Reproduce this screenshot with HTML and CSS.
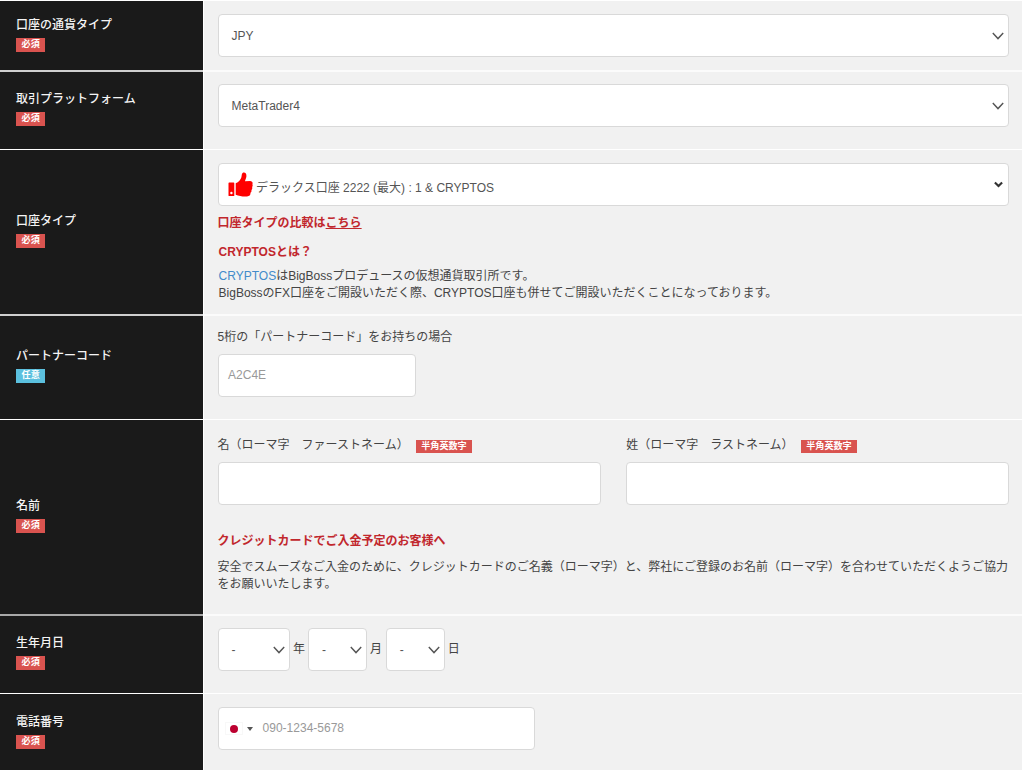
FILE: index.html
```html
<!DOCTYPE html>
<html lang="ja">
<head>
<meta charset="utf-8">
<title>口座開設</title>
<link rel="stylesheet" href="styles.css">
</head>
<body>
<div class="form">
  <div class="row row-currency">
    <div class="head"><span class="name">口座の通貨タイプ</span><span class="badge">必須</span></div>
    <div class="cell">
      <div class="control select"><span class="value">JPY</span><svg class="chevron" viewBox="0 0 12 8"><path d="M0.8 1 6 6.6 11.2 1"/></svg></div>
    </div>
  </div>
  <div class="row row-platform">
    <div class="head"><span class="name">取引プラットフォーム</span><span class="badge">必須</span></div>
    <div class="cell">
      <div class="control select"><span class="value">MetaTrader4</span><svg class="chevron" viewBox="0 0 12 8"><path d="M0.8 1 6 6.6 11.2 1"/></svg></div>
    </div>
  </div>
  <div class="row row-type">
    <div class="head"><span class="name">口座タイプ</span><span class="badge">必須</span></div>
    <div class="cell">
      <div class="control type-select">
        <svg class="thumb" viewBox="0 0 25 25"><path fill-rule="evenodd" d="M1.2 10.5H5.6Q6.3 10.5 6.3 11.2V23.4Q6.3 24.1 5.6 24.1H1.2Q.5 24.1 .5 23.4V11.2Q.5 10.5 1.2 10.5ZM3.4 19.8A1.2 1.2 0 1 0 3.4 22.2 1.2 1.2 0 1 0 3.4 19.8Z"/><path d="M7.7 11.2C10.8 10.4 12.6 7.6 13.4 5.2 13.8 3.6 13.7 1 15.2.6 17.4.2 18.7 2 18.4 4.4 18.2 6.3 17.2 7.8 17 9.2L22.2 8.9C24.6 9 25 11 24.4 12.2 24.9 13.2 24.7 14.4 24.1 15 24.5 16 24.2 17.4 23.4 18 23.8 19.2 23.3 20.3 22.5 20.8 22.7 23.2 21.4 24.3 19 24.4 14.8 24.7 11.2 24 7.7 22.7Z"/></svg>
        <span class="type-text">デラックス口座 2222 (最大) : 1 &amp; CRYPTOS</span>
        <svg class="arrow" viewBox="0 0 8 6"><path d="M.8 1.2 4 4.4 7.2 1.2"/></svg>
      </div>
      <p class="compare">口座タイプの比較は<a class="here">こちら</a></p>
      <p class="about-title">CRYPTOSとは？</p>
      <p class="about"><a class="link">CRYPTOS</a>はBigBossプロデュースの仮想通貨取引所です。<br>BigBossのFX口座をご開設いただく際、CRYPTOS口座も併せてご開設いただくことになっております。</p>
    </div>
  </div>
  <div class="row row-partner">
    <div class="head"><span class="name">パートナーコード</span><span class="badge optional">任意</span></div>
    <div class="cell">
      <p class="caption">5桁の「パートナーコード」をお持ちの場合</p>
      <div class="control partner placeholder">A2C4E</div>
    </div>
  </div>
  <div class="row row-name">
    <div class="head"><span class="name">名前</span><span class="badge">必須</span></div>
    <div class="cell">
      <div class="names">
        <div class="field"><p class="caption">名（ローマ字　ファーストネーム）<span class="badge">半角英数字</span></p><div class="control"></div></div>
        <div class="field"><p class="caption">姓（ローマ字　ラストネーム）<span class="badge">半角英数字</span></p><div class="control"></div></div>
      </div>
      <p class="card-title">クレジットカードでご入金予定のお客様へ</p>
      <p class="card-text">安全でスムーズなご入金のために、クレジットカードのご名義（ローマ字）と、弊社にご登録のお名前（ローマ字）を合わせていただくようご協力<br>をお願いいたします。</p>
    </div>
  </div>
  <div class="row row-birth">
    <div class="head"><span class="name">生年月日</span><span class="badge">必須</span></div>
    <div class="cell dates">
      <div class="control date year"><span class="value">-</span><svg class="chevron" viewBox="0 0 12 8"><path d="M0.8 1 6 6.6 11.2 1"/></svg></div><span class="unit">年</span>
      <div class="control date"><span class="value">-</span><svg class="chevron" viewBox="0 0 12 8"><path d="M0.8 1 6 6.6 11.2 1"/></svg></div><span class="unit unit-month">月</span>
      <div class="control date"><span class="value">-</span><svg class="chevron" viewBox="0 0 12 8"><path d="M0.8 1 6 6.6 11.2 1"/></svg></div><span class="unit">日</span>
    </div>
  </div>
  <div class="row row-phone">
    <div class="head"><span class="name">電話番号</span><span class="badge">必須</span></div>
    <div class="cell">
      <div class="control phone placeholder"><span class="flag"><span class="sun"></span></span><span class="caret"></span>090-1234-5678</div>
    </div>
  </div>
</div>
</body>
</html>
```
FILE: styles.css
```css
* { box-sizing: border-box; }
html, body { margin: 0; height: 770px; overflow: hidden; }
body {
  background: #fff;
  color: #444;
  font: 12px/17px "Liberation Sans", "Noto Sans CJK JP", sans-serif;
}
p { margin: 0; white-space: nowrap; }

/* rows: dark heading column and light content column */
.form {
  display: grid;
  grid-template-rows: 70px 79px 165px 105px 195px 79px 79px;
  width: 1022px;
}
.row {
  display: grid;
  grid-template-columns: 203px 1fr;
  column-gap: 1px;
}
.head, .cell { border-top: 1px solid #fff; }
.row-platform > *, .row-partner > *, .row-birth > * { border-top-width: 2px; }
.row-platform > .head, .row-partner > .head { border-top-color: #cfcfcf; }
.row-birth > .head { border-top-color: #a8a8a8; }
.row-platform > .cell, .row-partner > .cell, .row-birth > .cell { border-top-color: #fbfbfb; }
.head {
  display: flex;
  flex-direction: column;
  justify-content: center;
  align-items: flex-start;
  gap: 4px;
  padding: 0 0 4px 16px;
  background: #1a1a1a;
}
.row-currency .head { padding-bottom: 3px; }
.cell { padding: 13px 13px 0 13.6px; background: #f1f1f1; }
.row-platform .cell { padding-top: 12px; }
.name { color: #f4f4f4; font-weight: 500; }
.badge {
  display: inline-block;
  height: 14px;
  padding: 0 5.6px;
  background: #d9534f;
  color: #fff;
  font-size: 9.1px;
  line-height: 13px;
  font-weight: 700;
}
.optional { background: #5bc0de; }

/* form controls */
.control {
  display: flex;
  align-items: center;
  height: 43px;
  border: 1px solid #d9d9d9;
  border-radius: 4px;
  background: #fff;
  color: #555;
}
.select { justify-content: space-between; padding: 0 4px 0 13px; }
.select .value { padding-top: 1px; }
.chevron { width: 12px; height: 8px; fill: none; stroke: #555; stroke-width: 1.4; }
.placeholder { color: #999; }

.type-select { width: 791px; padding: 0 5px 0 9px; }
.thumb { width: 25px; height: 25px; fill: #f00; }
.type-text { flex: 1; padding: 8px 0 0 3.5px; }
.arrow { width: 9px; height: 7px; fill: none; stroke: #333; stroke-width: 1.9; }
.compare, .about-title, .card-title { color: #c1272d; font-weight: 700; }
.compare { margin-top: 9px; }
.here { text-decoration: underline; }
.about-title { margin: 12px 0 0 1px; }
.about { margin: 7px 0 0 1px; }
.link { color: #428bca; }

.row-partner .cell { padding-top: 12px; }
.row-partner .caption { padding-top: 1px; }
.partner { width: 198px; margin-top: 8px; padding-left: 9.5px; }

.row-name .cell { padding-top: 17px; }
.names { display: grid; grid-template-columns: 383px 383px; column-gap: 25.6px; }
.names .caption { display: flex; align-items: center; height: 17px; }
.names .badge { height: 13px; margin: 2px 0 0 7px; }
.names .control { margin-top: 8px; }
.card-title { margin-top: 28px; }
.card-text { margin-top: 9px; }

.row-birth .cell { padding-top: 12px; }
.dates { display: flex; }
.date { justify-content: space-between; width: 59px; padding: 0 4px 0 13px; }
.date .value { padding-top: 2px; }
.year { width: 72.4px; }
.unit { width: 18px; padding: 13px 0 0 3px; }
.unit-month { width: 18.8px; }

.phone { width: 317.5px; padding-left: 6px; }
.flag {
  display: flex;
  align-items: center;
  justify-content: center;
  width: 18px;
  height: 13px;
  border: 1px solid #f8f8f8;
}
.sun { width: 8px; height: 8px; border-radius: 50%; background: #bc0030; }
.caret {
  margin: 0 10px 0 4px;
  border: 3px solid transparent;
  border-top: 4px solid #555;
  border-bottom: 0;
}
```
